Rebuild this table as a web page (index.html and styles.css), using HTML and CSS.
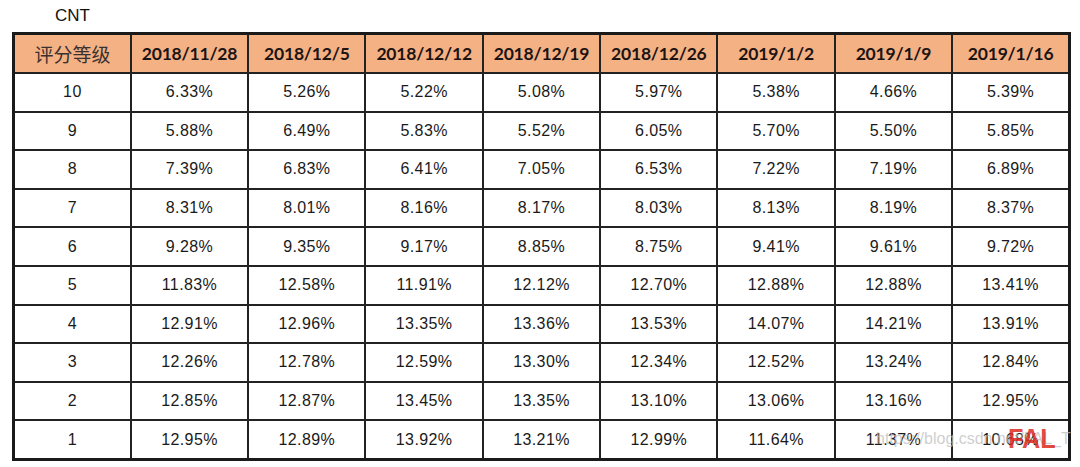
FILE: index.html
```html
<!DOCTYPE html>
<html lang="zh">
<head>
<meta charset="utf-8">
<title>CNT</title>
<link rel="stylesheet" href="styles.css">
</head>
<body>
<div class="page">
  <div class="title">CNT</div>
  <div class="table-wrap">
    <table class="grid">
      <thead>
        <tr>
          <th class="cn">评分等级</th>
          <th>2018/11/28</th>
          <th>2018/12/5</th>
          <th>2018/12/12</th>
          <th>2018/12/19</th>
          <th>2018/12/26</th>
          <th>2019/1/2</th>
          <th>2019/1/9</th>
          <th>2019/1/16</th>
        </tr>
      </thead>
      <tbody>
        <tr><td>10</td><td>6.33%</td><td>5.26%</td><td>5.22%</td><td>5.08%</td><td>5.97%</td><td>5.38%</td><td>4.66%</td><td>5.39%</td></tr>
        <tr><td>9</td><td>5.88%</td><td>6.49%</td><td>5.83%</td><td>5.52%</td><td>6.05%</td><td>5.70%</td><td>5.50%</td><td>5.85%</td></tr>
        <tr><td>8</td><td>7.39%</td><td>6.83%</td><td>6.41%</td><td>7.05%</td><td>6.53%</td><td>7.22%</td><td>7.19%</td><td>6.89%</td></tr>
        <tr><td>7</td><td>8.31%</td><td>8.01%</td><td>8.16%</td><td>8.17%</td><td>8.03%</td><td>8.13%</td><td>8.19%</td><td>8.37%</td></tr>
        <tr><td>6</td><td>9.28%</td><td>9.35%</td><td>9.17%</td><td>8.85%</td><td>8.75%</td><td>9.41%</td><td>9.61%</td><td>9.72%</td></tr>
        <tr><td>5</td><td>11.83%</td><td>12.58%</td><td>11.91%</td><td>12.12%</td><td>12.70%</td><td>12.88%</td><td>12.88%</td><td>13.41%</td></tr>
        <tr><td>4</td><td>12.91%</td><td>12.96%</td><td>13.35%</td><td>13.36%</td><td>13.53%</td><td>14.07%</td><td>14.21%</td><td>13.91%</td></tr>
        <tr><td>3</td><td>12.26%</td><td>12.78%</td><td>12.59%</td><td>13.30%</td><td>12.34%</td><td>12.52%</td><td>13.24%</td><td>12.84%</td></tr>
        <tr><td>2</td><td>12.85%</td><td>12.87%</td><td>13.45%</td><td>13.35%</td><td>13.10%</td><td>13.06%</td><td>13.16%</td><td>12.95%</td></tr>
        <tr><td>1</td><td>12.95%</td><td>12.89%</td><td>13.92%</td><td>13.21%</td><td>12.99%</td><td>11.64%</td><td>11.37%</td><td>10.68%</td></tr>
      </tbody>
    </table>
    <div class="watermark">https://blog.csdn.net/FAL_T</div>
    <div class="stamp">FAL</div>
  </div>
</div>
</body>
</html>
```
FILE: styles.css
```css
html, body {
  margin: 0;
  padding: 0;
  background: #ffffff;
}

.page {
  width: 1080px;
  height: 467px;
  padding: 0 9px 0 12px;
  box-sizing: border-box;
  font-family: "Liberation Sans", Arial, sans-serif;
  color: #151515;
}

.title {
  height: 32px;
  padding-left: 43px;
  padding-top: 6px;
  box-sizing: border-box;
  font-size: 17px;
  line-height: 20px;
  color: #111;
}

.table-wrap {
  position: relative;
}

.grid {
  width: 1059px;
  table-layout: fixed;
  border-collapse: collapse;
  border: 3px solid #1a1a1a;
}

.grid th,
.grid td {
  border: 2px solid #222;
  text-align: center;
  vertical-align: middle;
  padding: 0;
}

.grid th {
  height: 37px;
  background: #f4b183;
  font-family: Lato, "Open Sans", sans-serif;
  font-weight: 700;
  font-size: 17.5px;
  color: #1c1414;
  letter-spacing: -0.2px;
}

.grid th.cn {
  font-family: "Noto Sans CJK SC", sans-serif;
  font-weight: 400;
  font-size: 19px;
  color: #3a3030;
  letter-spacing: 0;
}

.grid td {
  height: 36.6px;
  font-size: 16px;
  letter-spacing: 0.4px;
  color: #1a1a1a;
}

.watermark {
  position: absolute;
  left: 864px;
  top: 398px;
  font-size: 16px;
  color: rgba(190, 190, 190, 0.75);
  white-space: nowrap;
  width: 195px;
  overflow: hidden;
}

.stamp {
  position: absolute;
  left: 996px;
  top: 391px;
  font-family: "Liberation Sans", Arial, sans-serif;
  font-size: 28px;
  line-height: 32px;
  font-weight: 700;
  color: rgba(220, 40, 30, 0.85);
  letter-spacing: 0;
  transform: scaleX(0.9);
  transform-origin: left top;
}
```
